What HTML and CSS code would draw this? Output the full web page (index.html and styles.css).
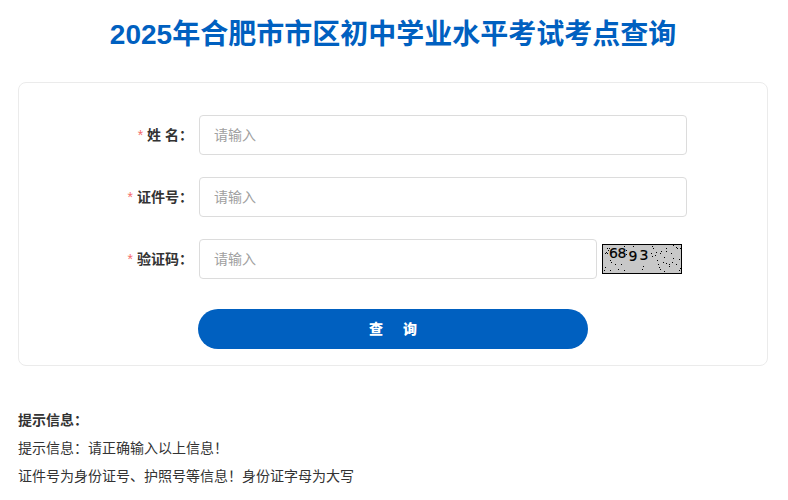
FILE: index.html
```
<!DOCTYPE html>
<html lang="zh-CN">
<head>
    <meta charset="UTF-8">
    <meta name="viewport" content="width=device-width, initial-scale=1.0">
    <title>2025年合肥市市区初中学业水平考试考点查询</title>
    <link rel="stylesheet" href="styles.css">
</head>
<body>
    <div class="container">
        <h1>2025年合肥市市区初中学业水平考试考点查询</h1>

        <form class="query-form">
            <div class="form-item">
                <label for="name">姓 名：</label>
                <input type="text" id="name" placeholder="请输入">
            </div>
            <div class="form-item">
                <label for="idcard">证件号：</label>
                <input type="text" id="idcard" placeholder="请输入">
            </div>
            <div class="form-item">
                <label for="code">验证码：</label>
                <input type="text" id="code" placeholder="请输入">
                <!-- 验证码图片 -->
                <svg class="captcha" width="80" height="30" viewBox="0 0 80 30">
                    <rect x="0.5" y="0.5" width="79" height="29" fill="#c8c8c8" stroke="#000"/>
                    <path shape-rendering="crispEdges" stroke="#000" d="M22 2.5h1M5 4.5h1M7 4.5h1M6 6.5h1M4 8.5h1M3 9.5h1M5 9.5h1M8 16.5h1M9 18.5h1M3 23.5h1M2 26.5h1M8 26.5h1M13 20.5h1M19 20.5h1M16 25.5h1M22 26.5h1M31 2.5h1M24 6.5h1M24 10.5h1M41 22.5h1M40 25.5h1M50 2.5h1M51 4.5h1M54 8.5h1M49 9.5h1M50 12.5h1M53 11.5h1M58 9.5h1M59 7.5h1M64 7.5h1M64 4.5h1M71 1.5h1M74 3.5h1M75 4.5h1M78 4.5h1M69 9.5h1M62 13.5h1M71 14.5h1M77 15.5h1M55 16.5h1M61 18.5h1M56 20.5h1M64 19.5h1M67 20.5h1M67 22.5h1M70 18.5h1M74 20.5h1M57 23.5h1M58 25.5h1M78 24.5h1M77 26.5h1M62 27.5h1"/>
                    <text x="7" y="14">6</text>
                    <text x="15.5" y="14">8</text>
                    <text x="26.5" y="17">9</text>
                    <text x="37.5" y="16">3</text>
                </svg>
            </div>
            <button type="button" class="btn-query">查询</button>
        </form>

        <div class="tips">
            <p><strong>提示信息：</strong></p>
            <p>提示信息：请正确输入以上信息！</p>
            <p>证件号为身份证号、护照号等信息！身份证字母为大写</p>
        </div>
    </div>
</body>
</html>
```
FILE: styles.css
```
* {
    box-sizing: border-box;
}

body {
    margin: 0;
    font-family: "Liberation Sans", "Noto Sans CJK SC", sans-serif;
    font-size: 14px;
    color: #333;
    background-color: #fff;
}

.container {
    width: 750px;
    margin-left: 18px;
}

h1 {
    margin: 0;
    padding-top: 15px;
    height: 82px;
    font-size: 28px;
    line-height: 40px;
    text-align: center;
    color: #0060c0;
}

.query-form {
    height: 284px;
    padding: 32px 80px 0 0;
    border: 1px solid #ebebeb;
    border-radius: 8px;
}

.form-item {
    display: flex;
    align-items: center;
    height: 40px;
    margin-bottom: 22px;
}

.form-item label {
    width: 180px;
    padding-right: 6px;
    line-height: 40px;
    text-align: right;
    font-weight: bold;
    white-space: nowrap;
}

.form-item label::before {
    content: "*";
    margin-right: 4px;
    font-weight: normal;
    color: #f56c6c;
}

.form-item input {
    flex: 1;
    min-width: 0;
    height: 40px;
    padding: 0 14px;
    border: 1px solid #dcdcdc;
    border-radius: 4px;
    font-family: inherit;
    font-size: 14px;
    color: #333;
    outline: none;
}

.form-item input::placeholder {
    color: #a0a0a0;
}

.captcha {
    flex: none;
    margin: 0 5px;
}

.captcha text {
    font-family: "DejaVu Sans", sans-serif;
    font-size: 14px;
    fill: #000;
    stroke: #000;
    stroke-width: 0.2px;
}

.btn-query {
    display: block;
    width: 390px;
    height: 40px;
    margin: 30px 0 0 179px;
    padding: 0 0 2px 20px;
    border: none;
    border-radius: 20px;
    background-color: #0060c0;
    font-family: inherit;
    font-size: 14px;
    font-weight: 900;
    letter-spacing: 20px;
    color: #fff;
    cursor: pointer;
}

.tips {
    margin-top: 40px;
    line-height: 28px;
}

.tips p {
    margin: 0;
}
```
